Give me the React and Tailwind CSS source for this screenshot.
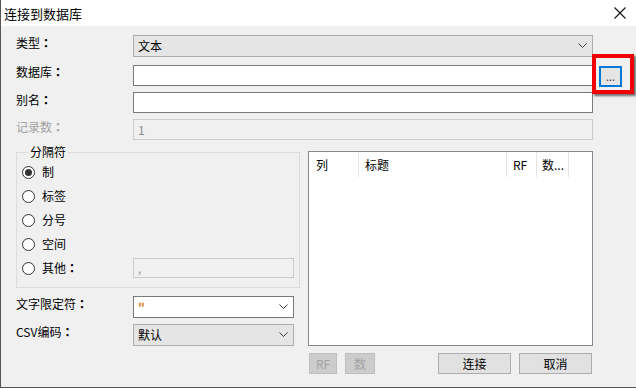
import React from 'react';

const font = { fontFamily: '"Noto Sans CJK SC", "Liberation Sans", sans-serif' };
const colonFont = { fontFamily: '"Noto Sans CJK TC", "Noto Sans CJK SC", sans-serif' };

function Chevron() {
  return (
    <svg width="9" height="6" viewBox="0 0 9 6" className="shrink-0">
      <path d="M0.5 0.5 L4.5 4.5 L8.5 0.5" fill="none" stroke="#3c3c3c" strokeWidth="1" />
    </svg>
  );
}

function Combo({ value, white, className = '', valueClass = '' }) {
  return (
    <div
      className={`h-[22px] flex items-center justify-between pl-[4px] pr-[5px] border ${
        white ? 'bg-white border-[#7a7a7a]' : 'bg-[#e5e5e5] border-[#adadad]'
      } ${className}`}
    >
      <span className={`text-[12px] leading-none ${valueClass}`}>{value}</span>
      <Chevron />
    </div>
  );
}

// labels end in a full-width colon, centred in its cell as in the reference
function Label({ text, muted }) {
  return (
    <div className={`w-[117px] shrink-0 text-[12px] leading-none pb-[6px] ${muted ? 'text-[#a0a0a0]' : 'text-black'}`}>
      {text}
      <span className="font-bold" style={colonFont}>：</span>
    </div>
  );
}

function Radio({ checked, label, colon }) {
  return (
    <div className="flex items-center gap-[7px]">
      <span className="w-[13px] h-[13px] rounded-full border border-[#333] bg-white flex items-center justify-center shrink-0">
        {checked && <span className="w-[7px] h-[7px] rounded-full bg-[#333]" />}
      </span>
      <span className="text-[12px] leading-none">
        {label}
        {colon && <span className="font-bold" style={colonFont}>：</span>}
      </span>
    </div>
  );
}

function Btn({ children, disabled, className = '' }) {
  return (
    <button
      className={`h-[21px] border text-[12px] leading-none flex items-center justify-center ${
        disabled ? 'bg-[#cccccc] border-[#bfbfbf] text-[#a3a3a3]' : 'bg-[#e1e1e1] border-[#adadad] text-black'
      } ${className}`}
    >
      {children}
    </button>
  );
}

export default function App() {
  return (
    <div className="relative w-[636px] h-[388px] border-l border-b border-[#555] bg-[#f0f0f0] text-black overflow-hidden" style={font}>
      {/* title bar */}
      <div className="h-[26px] bg-white flex items-center justify-between pl-[3px] pr-[10px]">
        <span className="text-[13px] leading-none">连接到数据库</span>
        <svg width="12" height="12" viewBox="0 0 12 12">
          <path d="M0.5 0.5 L11.5 11.5 M11.5 0.5 L0.5 11.5" stroke="#111" strokeWidth="1.1" />
        </svg>
      </div>

      {/* body */}
      <div className="pl-[15px] pt-[9px] flex flex-col">
        <div className="flex items-center h-[22px]">
          <Label text="类型" />
          <Combo value="文本" className="w-[460px]" />
        </div>

        <div className="flex items-center h-[22px] mt-[7px]">
          <Label text="数据库" />
          <div className="w-[460px] h-[21px] bg-white border border-[#7a7a7a]" />
          <button className="ml-[6px] mt-[2px] w-[23px] h-[21px] border-2 border-[#0078d7] bg-[#e5e5e5] flex items-center justify-center text-[11px] leading-none text-[#5a2a4a]">
            ...
          </button>
        </div>

        <div className="flex items-center h-[21px] mt-[6px]">
          <Label text="别名" />
          <div className="w-[460px] h-[21px] bg-white border border-[#7a7a7a]" />
        </div>

        <div className="flex items-center h-[21px] mt-[6px]">
          <Label text="记录数" muted />
          <div className="w-[460px] h-[21px] bg-[#f0f0f0] border border-[#cccccc] flex items-center pl-[4px] text-[12px] leading-none text-[#8a8a8a]">
            1
          </div>
        </div>

        {/* lower section */}
        <div className="flex gap-[8px] mt-[5px] items-start">
          <div className="w-[284px] flex flex-col">
            <fieldset className="border border-[#dcdcdc] pl-[5px] pr-[5px] pb-[7px]">
              <legend className="ml-[6px] px-[2px] text-[12px] leading-[14px]">分隔符</legend>
              <div className="flex flex-col pt-[1px]">
                <div className="h-[24px] flex items-center"><Radio checked label="制" /></div>
                <div className="h-[24px] flex items-center"><Radio label="标签" /></div>
                <div className="h-[24px] flex items-center"><Radio label="分号" /></div>
                <div className="h-[24px] flex items-center"><Radio label="空间" /></div>
                <div className="h-[24px] flex items-center justify-between">
                  <Radio label="其他" colon />
                  <div className="w-[161px] h-[20px] bg-[#f0f0f0] border border-[#cccccc] flex items-center pl-[4px] text-[11px] leading-none text-[#8a8a8a]">
                    ,
                  </div>
                </div>
              </div>
            </fieldset>

            <div className="flex items-center h-[22px] mt-[8px]">
              <Label text="文字限定符" />
              <Combo value={'"'} white className="w-[161px]" valueClass="text-[#d8862a] font-bold" />
            </div>
            <div className="flex items-center h-[22px] mt-[6px]">
              <Label text="CSV编码" />
              <Combo value="默认" className="w-[161px]" />
            </div>
          </div>

          <div className="w-[285px] mt-[6px] flex flex-col">
            <div className="h-[195px] bg-white border border-[#828790]">
              <div className="flex h-[25px] text-[12px] leading-none">
                <div className="w-[50px] border-r border-[#e5e5e5] flex items-center pl-[7px]">列</div>
                <div className="w-[148px] border-r border-[#e5e5e5] flex items-center pl-[6px]">标题</div>
                <div className="w-[30px] border-r border-[#e5e5e5] flex items-center pl-[6px]">RF</div>
                <div className="w-[32px] border-r border-[#e5e5e5] flex items-center pl-[5px]">数...</div>
              </div>
            </div>
            <div className="flex items-center justify-between mt-[7px] px-[1px]">
              <div className="flex gap-[8px]">
                <Btn disabled className="w-[28px]">RF</Btn>
                <Btn disabled className="w-[30px]">数</Btn>
              </div>
              <div className="flex gap-[8px]">
                <Btn className="w-[73px]">连接</Btn>
                <Btn className="w-[73px]">取消</Btn>
              </div>
            </div>
          </div>
        </div>
      </div>

      {/* red annotation box */}
      <div className="absolute left-[591px] top-[54px] w-[42px] h-[40px] border-4 border-[#f00000] shadow-[2px_2px_2px_rgba(0,0,0,0.55)] pointer-events-none" />
    </div>
  );
}
